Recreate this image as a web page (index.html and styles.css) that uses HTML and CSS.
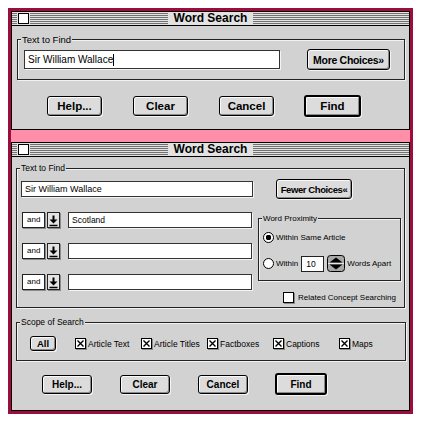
FILE: index.html
```html
<!DOCTYPE html>
<html lang="en">
<head>
    <meta charset="UTF-8">
    <title>Word Search</title>
    <link rel="stylesheet" href="styles.css">
</head>
<body>

<div class="frame">

    <!-- short dialog -->
    <div class="window win-short">
        <div class="titlebar">
            <span class="close-box"></span>
            <span class="title">Word Search</span>
        </div>
        <div class="win-body">
            <div class="group find-group">
                <span class="group-label">Text to Find</span>
                <div class="find-row">
                    <div class="field main-field">Sir William Wallace<span class="caret"></span></div>
                    <button class="btn btn-choices">More Choices&raquo;</button>
                </div>
            </div>
            <div class="actions">
                <button class="btn btn-action">Help...</button>
                <button class="btn btn-action">Clear</button>
                <button class="btn btn-action">Cancel</button>
                <button class="btn btn-action btn-default">Find</button>
            </div>
        </div>
    </div>

    <!-- long dialog -->
    <div class="window win-long">
        <div class="titlebar">
            <span class="close-box"></span>
            <span class="title">Word Search</span>
        </div>
        <div class="win-body">
            <div class="group find-group-long">
                <span class="group-label">Text to Find</span>
                <div class="find-grid">
                    <div class="find-left">
                        <div class="field field-main">Sir William Wallace</div>
                        <div class="term-row">
                            <div class="op-box">and</div>
                            <div class="op-arrow">
                                <svg width="11" height="13" viewBox="0 0 11 13"><path d="M5.5 1.5v5" stroke="#000" stroke-width="2"/><path d="M1.5 5.5h8l-4 4z" fill="#000"/><path d="M1.5 11.5h8" stroke="#000" stroke-width="1.5"/></svg>
                            </div>
                            <div class="field field-term">Scotland</div>
                        </div>
                        <div class="term-row">
                            <div class="op-box">and</div>
                            <div class="op-arrow">
                                <svg width="11" height="13" viewBox="0 0 11 13"><path d="M5.5 1.5v5" stroke="#000" stroke-width="2"/><path d="M1.5 5.5h8l-4 4z" fill="#000"/><path d="M1.5 11.5h8" stroke="#000" stroke-width="1.5"/></svg>
                            </div>
                            <div class="field field-term"></div>
                        </div>
                        <div class="term-row">
                            <div class="op-box">and</div>
                            <div class="op-arrow">
                                <svg width="11" height="13" viewBox="0 0 11 13"><path d="M5.5 1.5v5" stroke="#000" stroke-width="2"/><path d="M1.5 5.5h8l-4 4z" fill="#000"/><path d="M1.5 11.5h8" stroke="#000" stroke-width="1.5"/></svg>
                            </div>
                            <div class="field field-term"></div>
                        </div>
                    </div>
                    <div class="find-right">
                        <button class="btn btn-fewer">Fewer Choices&laquo;</button>
                        <div class="group prox-group">
                            <span class="group-label">Word Proximity</span>
                            <div class="radio-row">
                                <span class="radio checked"></span>
                                <span class="small-text">Within Same Article</span>
                            </div>
                            <div class="radio-row radio-row-num">
                                <span class="radio"></span>
                                <span class="small-text">Within</span>
                                <div class="num-box">10</div>
                                <svg class="stepper" width="18" height="17" viewBox="0 0 18 17"><rect x="0.5" y="0.5" width="17" height="16" rx="3" fill="#a8a8a8" stroke="#000"/><path d="M2.5 7.5h13l-6.5-5z" fill="#000"/><path d="M1 8.5h16" stroke="#e8e8e8"/><path d="M2.5 9.5h13l-6.5 5z" fill="#000"/></svg>
                                <span class="small-text">Words Apart</span>
                            </div>
                        </div>
                        <div class="related-row">
                            <span class="check"></span>
                            <span class="small-text">Related Concept Searching</span>
                        </div>
                    </div>
                </div>
            </div>

            <div class="group scope-group">
                <span class="group-label">Scope of Search</span>
                <div class="scope-row">
                    <button class="btn btn-all">All</button>
                    <div class="scope-items">
                        <div class="scope-item"><span class="check"><svg width="9" height="9" viewBox="0 0 9 9"><path d="M1.5 1.5l6 6M7.5 1.5l-6 6" stroke="#000" stroke-width="1.4"/></svg></span><span class="scope-text">Article Text</span></div>
                        <div class="scope-item"><span class="check"><svg width="9" height="9" viewBox="0 0 9 9"><path d="M1.5 1.5l6 6M7.5 1.5l-6 6" stroke="#000" stroke-width="1.4"/></svg></span><span class="scope-text">Article Titles</span></div>
                        <div class="scope-item"><span class="check"><svg width="9" height="9" viewBox="0 0 9 9"><path d="M1.5 1.5l6 6M7.5 1.5l-6 6" stroke="#000" stroke-width="1.4"/></svg></span><span class="scope-text">Factboxes</span></div>
                        <div class="scope-item"><span class="check"><svg width="9" height="9" viewBox="0 0 9 9"><path d="M1.5 1.5l6 6M7.5 1.5l-6 6" stroke="#000" stroke-width="1.4"/></svg></span><span class="scope-text">Captions</span></div>
                        <div class="scope-item"><span class="check"><svg width="9" height="9" viewBox="0 0 9 9"><path d="M1.5 1.5l6 6M7.5 1.5l-6 6" stroke="#000" stroke-width="1.4"/></svg></span><span class="scope-text">Maps</span></div>
                    </div>
                </div>
            </div>

            <div class="actions actions-long">
                <button class="btn btn-action-sm">Help...</button>
                <button class="btn btn-action-sm">Clear</button>
                <button class="btn btn-action-sm">Cancel</button>
                <button class="btn btn-action-sm btn-default">Find</button>
            </div>
        </div>
    </div>

</div>

</body>
</html>
```

FILE: styles.css
```css
body {
    margin: 8px;
    background-color: #ffffff;
    font-family: "Liberation Sans", Arial, sans-serif;
    color: #000;
}

.frame {
    width: 399px;
    height: 400px;
    border: 3px solid #9c0c3c;
    border-right-width: 4px;
    background-color: #ff8fa8;
    display: flex;
    flex-direction: column;
}

.window {
    border: 1px solid #000;
    background-color: #d2d2d2;
    display: flex;
    flex-direction: column;
}

.win-short {
    height: 117px;
}

.win-long {
    height: 267px;
    margin-top: 12px;
}

/* title bar with stripes */
.titlebar {
    height: 13px;
    border-bottom: 1px solid #000;
    background: repeating-linear-gradient(#e2e2e2 0 1px, #727272 1px 2px);
    display: grid;
    grid-template-columns: 1fr auto 1fr;
    align-items: center;
}

.close-box {
    width: 9px;
    height: 9px;
    margin-left: 6px;
    border: 1px solid #000;
    background-color: #fff;
    box-shadow: 0 0 0 1px #e2e2e2;
}

.title {
    grid-column: 2;
    line-height: 13px;
    padding: 0 6px;
    background-color: #e2e2e2;
    font-size: 12px;
    font-weight: bold;
}

.win-body {
    flex: 1;
}

/* group boxes */
.group {
    position: relative;
    border: 1px solid #222;
    box-shadow: 1px 1px 0 #f2f2f2, inset 1px 1px 0 #f2f2f2;
}

.group-label {
    position: absolute;
    top: -6px;
    left: 3px;
    padding: 0 1px;
    line-height: 11px;
    font-size: 8.5px;
    background-color: #d2d2d2;
}

.find-group {
    margin: 13px 4px 0 5px;
    padding: 9px 14px 9px 6px;
}

.find-group .group-label {
    font-size: 9.5px;
}

.find-row {
    display: flex;
    justify-content: space-between;
    align-items: center;
}

/* text fields */
.field {
    background-color: #fff;
    border: 1px solid #333;
    box-shadow: 1px 1px 0 #f4f4f4;
    padding-left: 3px;
    box-sizing: border-box;
    white-space: nowrap;
}

.main-field {
    width: 256px;
    height: 19px;
    line-height: 17px;
    font-size: 10px;
    display: flex;
    align-items: center;
}

.caret {
    display: inline-block;
    width: 1px;
    height: 12px;
    background-color: #000;
}

/* buttons */
.btn {
    font-family: "Liberation Sans", Arial, sans-serif;
    font-weight: bold;
    color: #000;
    background-color: #dcdcdc;
    border: 1px solid #000;
    border-radius: 3px;
    box-shadow: inset 1px 1px 0 #fafafa, inset -1px -1px 0 #8a8a8a, 1px 1px 0 #f4f4f4;
    padding: 0;
    box-sizing: border-box;
}

.btn-choices {
    width: 83px;
    height: 21px;
    font-size: 10.5px;
    letter-spacing: -0.3px;
}

.actions {
    display: flex;
    align-items: center;
    gap: 31px;
    margin-top: 15px;
    padding-left: 35px;
}

.btn-action {
    width: 55px;
    height: 20px;
    font-size: 11.5px;
}

.btn-default {
    border-width: 2px;
    margin-left: -1px;
}

.btn-action.btn-default {
    width: 57px;
    height: 22px;
}

/* long dialog */
.find-group-long {
    margin: 11px 4px 0 4px;
    padding: 10px 3px 4px 4px;
}

.find-grid {
    display: grid;
    grid-template-columns: 232px 143px;
    column-gap: 5px;
}

.find-left {
    display: flex;
    flex-direction: column;
}

.field-main {
    margin-top: 2px;
    width: 232px;
    height: 16px;
    line-height: 14px;
    font-size: 9px;
}

.term-row {
    display: flex;
    align-items: center;
    margin-top: 15px;
    height: 16px;
}

.op-box {
    width: 23px;
    height: 16px;
    margin-left: 1px;
    box-sizing: border-box;
    border: 1px solid #222;
    box-shadow: 1px 1px 0 #8a8a8a;
    background-color: #fff;
    font-size: 8px;
    line-height: 14px;
    padding-left: 4px;
}

.op-arrow {
    width: 13px;
    height: 16px;
    margin-left: 2px;
    box-sizing: border-box;
    border: 1px solid #222;
    box-shadow: 1px 1px 0 #8a8a8a;
    background-color: #e4e4e4;
    display: flex;
    align-items: center;
    justify-content: center;
}

.field-term {
    width: 184px;
    height: 16px;
    margin-left: 8px;
    line-height: 14px;
    font-size: 8.5px;
}

.find-right {
    display: flex;
    flex-direction: column;
    align-items: flex-start;
}

.btn-fewer {
    width: 76px;
    height: 20px;
    margin-left: 18px;
    font-size: 9.5px;
    letter-spacing: -0.4px;
}

.prox-group {
    width: 143px;
    box-sizing: border-box;
    margin-top: 19px;
    padding: 12px 0 8px 4px;
}

.prox-group .group-label {
    font-size: 8px;
}

.small-text {
    font-size: 8px;
    line-height: 11px;
    white-space: nowrap;
}

.radio-row {
    display: flex;
    align-items: center;
    height: 12px;
    gap: 2px;
}

.radio-row-num {
    height: 17px;
    margin-top: 12px;
}

.radio {
    width: 11px;
    height: 11px;
    box-sizing: border-box;
    border: 1px solid #000;
    border-radius: 50%;
    background-color: #fff;
}

.radio.checked {
    border-width: 1.5px;
    background: radial-gradient(circle, #000 0 2.6px, #fff 3px);
}

.num-box {
    width: 23px;
    height: 16px;
    box-sizing: border-box;
    margin-left: 1px;
    border: 1px solid #222;
    background-color: #fff;
    font-size: 8.5px;
    line-height: 14px;
    padding-left: 4px;
}

.stepper {
    margin-left: 1px;
}

.related-row {
    display: flex;
    align-items: center;
    gap: 4px;
    margin-top: 11px;
    padding-left: 25px;
}

.check {
    width: 11px;
    height: 11px;
    box-sizing: border-box;
    border: 1px solid #000;
    background-color: #fff;
    box-shadow: 1px 1px 0 #8a8a8a;
    display: flex;
    align-items: center;
    justify-content: center;
}

/* scope of search */
.scope-group {
    margin: 14px 3px 0 4px;
    padding: 13px 0 9px 13px;
}

.scope-row {
    display: flex;
    align-items: center;
}

.btn-all {
    width: 31px;
    height: 15px;
    font-size: 9.5px;
    margin-right: 19px;
}

.scope-items {
    display: grid;
    grid-template-columns: repeat(5, 66px);
}

.scope-item {
    display: flex;
    align-items: center;
    gap: 2px;
}

.scope-text {
    font-size: 8.5px;
    white-space: nowrap;
}

.actions-long {
    gap: 28px;
    margin-top: 12px;
    padding-left: 30px;
}

.btn-action-sm {
    width: 50px;
    height: 19px;
    font-size: 10px;
}

.btn-action-sm.btn-default {
    width: 52px;
    height: 22px;
}
```
